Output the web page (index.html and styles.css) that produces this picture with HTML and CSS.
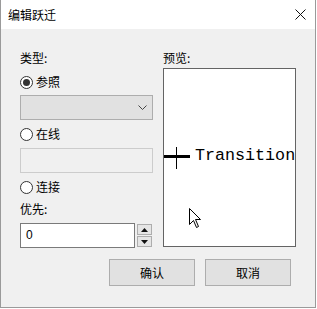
FILE: index.html
```html
<!DOCTYPE html>
<html>
<head>
<meta charset="utf-8">
<link rel="stylesheet" href="styles.css">
</head>
<body>
<div class="window">
  <div class="titlebar">
    <span class="title">编辑跃迁</span>
    <svg class="close" width="11" height="11" viewBox="0 0 11 11"><path d="M0.5 0.5 L10.5 10.5 M10.5 0.5 L0.5 10.5" stroke="#111" stroke-width="1" fill="none"/></svg>
  </div>
  <div class="client">
    <div class="columns">
      <div class="left">
        <div class="label">类型:</div>
        <div class="radio r1"><span class="circle checked"></span><span>参照</span></div>
        <div class="combo">
          <svg class="chev" width="9" height="5" viewBox="0 0 9 5"><path d="M0.5 0.5 L4.5 4.5 L8.5 0.5" stroke="#444" stroke-width="1" fill="none"/></svg>
        </div>
        <div class="radio r2"><span class="circle"></span><span>在线</span></div>
        <div class="textbox disabled"></div>
        <div class="radio r2"><span class="circle"></span><span>连接</span></div>
        <div class="label l2">优先:</div>
        <div class="spin">
          <div class="spinbox">0</div>
          <div class="spinbtns">
            <div class="sbtn"><svg width="7" height="4" viewBox="0 0 7 4"><path d="M3.5 0 L7 4 L0 4 Z" fill="#111"/></svg></div>
            <div class="sbtn"><svg width="7" height="4" viewBox="0 0 7 4"><path d="M0 0 L7 0 L3.5 4 Z" fill="#111"/></svg></div>
          </div>
        </div>
      </div>
      <div class="right">
        <div class="label">预览:</div>
        <div class="preview">
          <div class="hline"></div>
          <div class="vline"></div>
          <div class="ttext">Transition</div>
          <svg class="cursor" width="13" height="21" viewBox="0 0 13 21"><path d="M0.5 0.5 L0.5 16.5 L4.5 12.5 L7.5 19.5 L9.5 18.5 L6.5 11.5 L11.5 11.5 Z" fill="#fff" stroke="#000" stroke-width="1" stroke-linejoin="miter"/></svg>
        </div>
      </div>
    </div>
    <div class="buttons">
      <div class="btn">确认</div>
      <div class="btn">取消</div>
    </div>
  </div>
</div>
</body>
</html>
```
FILE: styles.css
```css
html, body {
  margin: 0;
  padding: 0;
  background: #ffffff;
}
body {
  font-family: "Noto Sans CJK SC", "Noto Sans", sans-serif;
  font-size: 12px;
  color: #000;
}
.window {
  width: 314px;
  height: 307px;
  border-left: 1px solid #9a9a9a;
  border-right: 1px solid #9a9a9a;
  border-bottom: 1px solid #9a9a9a;
  background: #f0f0f0;
  display: flex;
  flex-direction: column;
}
.titlebar {
  height: 29px;
  background: #ffffff;
  display: flex;
  align-items: center;
  justify-content: space-between;
  padding-left: 7px;
  padding-right: 9px;
  flex: none;
}
.title {
  line-height: 16px;
  margin-top: 0px;
}
.close {
  display: block;
  margin-bottom: 1px;
}
.client {
  padding-top: 21px;
  padding-left: 19px;
  padding-right: 24px;
}
.columns {
  display: grid;
  grid-template-columns: 133px 133px;
  column-gap: 10px;
}
.label {
  height: 16px;
  line-height: 16px;
}
.l2 {
  margin-top: 6px;
}
.radio {
  height: 16px;
  line-height: 16px;
  display: flex;
  align-items: center;
  gap: 3px;
}
.r1 {
  margin-top: 8px;
}
.r2 {
  margin-top: 6px;
}
.circle {
  width: 11px;
  height: 11px;
  border: 1px solid #333;
  border-radius: 50%;
  background: #fff;
  position: relative;
  flex: none;
}
.circle.checked::after {
  content: "";
  position: absolute;
  left: 2px;
  top: 2px;
  width: 7px;
  height: 7px;
  border-radius: 50%;
  background: #333;
}
.combo {
  margin-top: 5px;
  height: 23px;
  border: 1px solid #adadad;
  background: #e1e1e1;
  display: flex;
  align-items: center;
  justify-content: flex-end;
  padding-right: 5px;
}
.chev {
  display: block;
}
.textbox {
  margin-top: 6px;
  height: 23px;
  border: 1px solid #cccccc;
  background: #f0f0f0;
}
.spin {
  margin-top: 6px;
  display: flex;
  gap: 2px;
}
.spinbox {
  width: 108px;
  height: 23px;
  border: 1px solid #7a7a7a;
  background: #fff;
  font-family: "Liberation Sans", sans-serif;
  font-size: 12px;
  line-height: 23px;
  padding-left: 5px;
}
.spinbtns {
  display: flex;
  flex-direction: column;
  gap: 1px;
  padding-top: 1px;
}
.sbtn {
  width: 13px;
  height: 9px;
  border: 1px solid #adadad;
  background: #e5e5e5;
  display: flex;
  align-items: center;
  justify-content: center;
}
.sbtn svg {
  display: block;
}
.preview {
  margin-top: 2px;
  height: 177px;
  border: 1px solid #646464;
  background: #ffffff;
  position: relative;
  overflow: hidden;
}
.hline {
  position: absolute;
  left: 0;
  top: 86px;
  width: 26px;
  height: 3px;
  background: #000;
}
.vline {
  position: absolute;
  left: 12px;
  top: 78px;
  width: 1px;
  height: 22px;
  background: #000;
}
.ttext {
  position: absolute;
  left: 31px;
  top: 78px;
  font-family: "Liberation Mono", monospace;
  font-size: 16.7px;
  line-height: 18px;
  white-space: nowrap;
  color: #000;
}
.cursor {
  position: absolute;
  left: 25px;
  top: 139px;
}
.buttons {
  margin-top: 11px;
  display: flex;
  justify-content: flex-end;
  gap: 10px;
}
.btn {
  width: 84px;
  height: 25px;
  border: 1px solid #adadad;
  background: #e1e1e1;
  display: flex;
  align-items: center;
  justify-content: center;
  line-height: 16px;
}
```
